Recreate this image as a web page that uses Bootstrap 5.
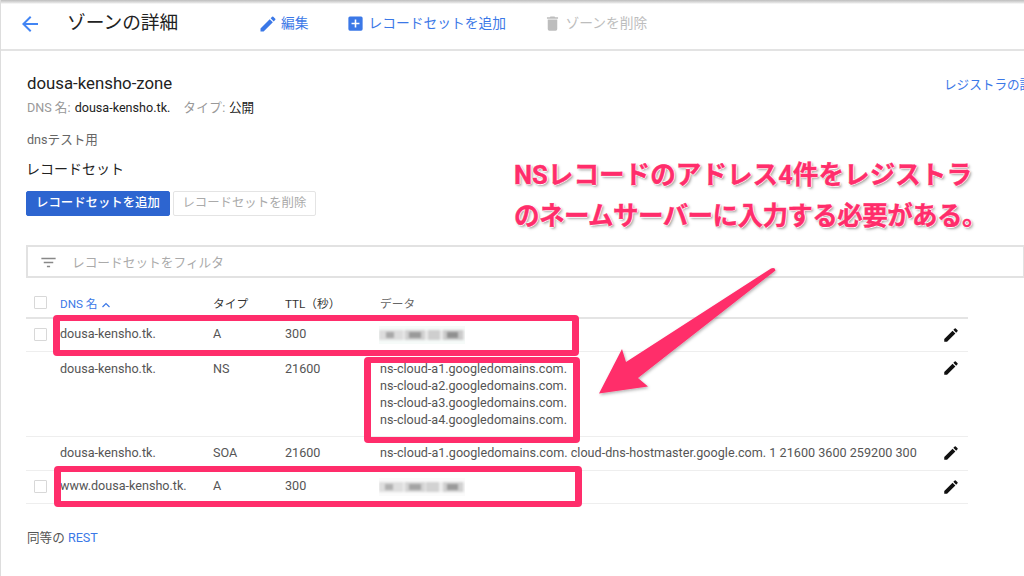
<!DOCTYPE html>
<html lang="ja">
<head>
<meta charset="utf-8">
<title>ゾーンの詳細</title>
<link href="https://cdn.jsdelivr.net/npm/bootstrap@5.3.0/dist/css/bootstrap.min.css" rel="stylesheet">
<style>
html,body{width:1024px;height:576px;overflow:hidden}
body{font-family:Roboto,"Noto Sans CJK JP",sans-serif;font-size:12.6px;color:#333;background:#fff;position:relative;border-left:1px solid #ddd}
.topbar{height:51px;border-bottom:2px solid #e3e3e3;padding:0 0 2px 17px;background:linear-gradient(#bdbdbd,#e8e8e8 3px,#fff 4px)}
.back-ic{width:24px;height:24px;fill:#4285f4;flex:none}
.page-title{font-size:18.7px;line-height:1;color:#222;margin:0 0 0 25px;width:190.500px;font-weight:400;flex:none}
.act{font-size:13.750px;color:#3b78e7;white-space:nowrap;flex:none}
.act svg{fill:currentColor;flex:none}
.act-edit{width:88px;gap:3.500px}
.act-add{width:197.500px;gap:4px}
.act-del{gap:3.500px}
.act-off{color:#bdbdbd}
.main-area{padding:0 0 0 25px}
.zone-name{font-size:16.800px;line-height:20px;color:#222;margin:22px 0 0 1px;font-weight:400}
.reg-link{font-size:12.6px;color:#3b78e7;white-space:nowrap;text-decoration:none;position:absolute;left:943px;top:76px}
.meta-line{font-size:12.6px;color:#999;line-height:16px;margin:7px 0 0 1px}
.meta-line b{font-weight:400;color:#222}
.meta-name{margin-left:1px}
.meta-gap{margin-left:13px;letter-spacing:.4px}
.desc{font-size:12.6px;color:#666;line-height:16px;margin:16px 0 0 1px}
.sect-title{font-size:14px;line-height:18px;color:#222;margin:12px 0 0;font-weight:400}
.btn-prim,.btn-off{font-size:12.4px;line-height:1;border-radius:2px;height:25px;padding:0 9px;display:flex;align-items:center;white-space:nowrap}
.btn-prim{background:#2d65d0;border:1px solid #2d65d0;color:#fff;font-weight:500}
.btn-off{background:#fff;border:1px solid #e4e4e4;color:#aaa;padding:0 8.500px}
.btn-row{margin-top:13px;gap:3px}
.filter-box{height:33px;margin-top:29px;border:2px solid #e2e2e2;border-right-width:1px;color:#aaa;font-size:12.7px;padding:2px 0 0 10.500px;gap:14.500px;width:998px}
.filter-box svg{fill:#888;flex:none}
.filter-text{padding-top:1px}
.rec-table{width:942px;table-layout:fixed;margin:0;font-size:12.6px;color:#555;--bs-table-color:#555}
.rec-table th,.rec-table td{padding:0;vertical-align:middle;border-bottom:1px solid #eee;font-weight:400;box-shadow:none}
.rec-table th{height:40px;border-bottom:2px solid #e4e4e4;font-size:11.700px;color:#333;vertical-align:bottom;padding-bottom:3.500px}
.rec-table th.check-h{padding-bottom:8px}
.rec-table th.data-h{color:#666}
.rec-table th.sort-h{color:#3b78e7}
.rec-table .r1 td{height:33px}
.rec-table .r2 td{height:85px;vertical-align:top;padding-top:8px;line-height:17px}
.rec-table .r3 td{height:34px}
.rec-table .r4 td{height:33px}
.soa-data{letter-spacing:.02px}
.fake-check{display:block;width:13px;height:13px;border:1px solid #d8d8d8;margin-left:8px;border-radius:1px}
.edit-ic{width:18px;height:18px;fill:#111;display:block;margin-left:auto;margin-right:8px}
.r2 .edit-ic{margin-top:-1px}
.blur-box{display:block;width:86px;height:18px;margin-left:-1px;overflow:hidden}
.blur-inner{filter:blur(.8px)}
.footer-line{font-size:12.6px;color:#555;margin:26px 0 0 1px;line-height:16px}
.footer-line a{color:#3b78e7;text-decoration:none}
.hl{position:absolute;border:7px solid #ff2d6b;border-top-width:6px;border-bottom-width:6px;border-radius:4px;pointer-events:none}
.hl-a{left:52px;top:315px;width:526px;height:41px}
.hl-b{left:363px;top:357px;width:216px;height:86px}
.hl-c{left:53px;top:466px;width:528px;height:41px}
.note{position:absolute;left:513px;top:155px;font-size:25.6px;line-height:41px;font-weight:700;color:#ff2d6b;white-space:nowrap;-webkit-text-stroke:.4px #ff2d6b;
text-shadow:1px 0 #fff,-1px 0 #fff,0 1px #fff,0 -1px #fff,1px 1px 2px #999,2px 2px 3px #bbb}
.note-tight{letter-spacing:-.650px}
.arrow-art{position:absolute;left:-1px;top:0;pointer-events:none}
</style>
</head>
<body>
<header class="topbar d-flex align-items-center">
  <svg class="back-ic" viewBox="0 0 24 24"><path d="M20 11H7.830l5.590-5.590L12 4l-8 8 8 8 1.410-1.410L7.830 13H20z"/></svg>
  <h1 class="page-title">ゾーンの詳細</h1>
  <div class="act act-edit d-flex align-items-center"><svg width="20" height="20" viewBox="0 0 24 24"><path d="M3 17.250V21h3.750L17.810 9.940l-3.750-3.750L3 17.250zM20.710 7.040a1 1 0 0 0 0-1.410l-2.340-2.340a1 1 0 0 0-1.410 0l-1.830 1.830 3.750 3.750 1.830-1.830z"/></svg>編集</div>
  <div class="act act-add d-flex align-items-center"><svg width="19" height="19" viewBox="0 0 24 24"><path d="M19 3H5a2 2 0 0 0-2 2v14a2 2 0 0 0 2 2h14a2 2 0 0 0 2-2V5a2 2 0 0 0-2-2zm-2 10h-4v4h-2v-4H7v-2h4V7h2v4h4v2z"/></svg>レコードセットを追加</div>
  <div class="act act-off act-del d-flex align-items-center"><svg width="19" height="19" viewBox="0 0 24 24"><path d="M6 19a2 2 0 0 0 2 2h8a2 2 0 0 0 2-2V7H6v12zM19 4h-3.500l-1-1h-5l-1 1H5v2h14V4z"/></svg>ゾーンを削除</div>
</header>

<main class="main-area">
  <h2 class="zone-name">dousa-kensho-zone</h2>
  <a class="reg-link" href="#">レジストラの設定</a>
  <div class="meta-line">DNS 名: <b class="meta-name">dousa-kensho.tk.</b><span class="meta-gap">タイプ:</span> <b>公開</b></div>
  <p class="desc mb-0">dnsテスト用</p>
  <h3 class="sect-title">レコードセット</h3>
  <div class="d-flex btn-row">
    <button type="button" class="btn btn-prim">レコードセットを追加</button>
    <button type="button" class="btn btn-off">レコードセットを削除</button>
  </div>
  <div class="filter-box d-flex align-items-center">
    <svg width="19" height="19" viewBox="0 0 24 24"><path d="M10 18h4v-2h-4v2zM3 6v2h18V6H3zm3 7h12v-2H6v2z"/></svg>
    <span class="filter-text">レコードセットをフィルタ</span>
  </div>
  <table class="table rec-table">
    <colgroup><col style="width:34px"><col style="width:153px"><col style="width:72px"><col style="width:95px"><col><col style="width:41px"></colgroup>
    <thead><tr>
      <th class="check-h"><span class="fake-check"></span></th>
      <th class="sort-h">DNS 名 <svg width="12" height="12" viewBox="0 0 24 24" fill="none" stroke="#3b78e7" stroke-width="2.400"><path d="M5 16l7-7 7 7"/></svg></th>
      <th>タイプ</th><th>TTL（秒）</th><th class="data-h">データ</th><th></th>
    </tr></thead>
    <tbody>
      <tr class="r1"><td><span class="fake-check"></span></td><td>dousa-kensho.tk.</td><td>A</td><td>300</td>
        <td><svg class="blur-box" viewBox="0 0 86 18"><rect width="86" height="18" fill="#f6fbf9"/><g class="blur-inner"><rect y="4" width="86" height="10" fill="#ebebeb"/><rect y="4" width="24" height="10" fill="#dcdcdc"/><rect x="7" y="6" width="8" height="6" fill="#a8a8a8"/><rect x="26" y="4" width="20" height="10" fill="#d0d0d0"/><rect x="30" y="6" width="12" height="6" fill="#9a9a9a"/><rect x="49" y="4" width="12" height="10" fill="#cecece"/><rect x="64" y="4" width="20" height="10" fill="#cacaca"/><rect x="68" y="6" width="11" height="6" fill="#909090"/></g></svg></td>
        <td><svg class="edit-ic" viewBox="0 0 24 24"><path d="M3 17.250V21h3.750L17.810 9.940l-3.750-3.750L3 17.250zM20.710 7.040a1 1 0 0 0 0-1.410l-2.340-2.340a1 1 0 0 0-1.410 0l-1.830 1.830 3.750 3.750 1.830-1.830z"/></svg></td></tr>
      <tr class="r2"><td></td><td>dousa-kensho.tk.</td><td>NS</td><td>21600</td>
        <td>ns-cloud-a1.googledomains.com.<br>ns-cloud-a2.googledomains.com.<br>ns-cloud-a3.googledomains.com.<br>ns-cloud-a4.googledomains.com.</td>
        <td><svg class="edit-ic" viewBox="0 0 24 24"><path d="M3 17.250V21h3.750L17.810 9.940l-3.750-3.750L3 17.250zM20.710 7.040a1 1 0 0 0 0-1.410l-2.340-2.340a1 1 0 0 0-1.410 0l-1.830 1.830 3.750 3.750 1.830-1.830z"/></svg></td></tr>
      <tr class="r3"><td></td><td>dousa-kensho.tk.</td><td>SOA</td><td>21600</td>
        <td class="text-nowrap soa-data">ns-cloud-a1.googledomains.com. cloud-dns-hostmaster.google.com. 1 21600 3600 259200 300</td>
        <td><svg class="edit-ic" viewBox="0 0 24 24"><path d="M3 17.250V21h3.750L17.810 9.940l-3.750-3.750L3 17.250zM20.710 7.040a1 1 0 0 0 0-1.410l-2.340-2.340a1 1 0 0 0-1.410 0l-1.830 1.830 3.750 3.750 1.830-1.830z"/></svg></td></tr>
      <tr class="r4"><td><span class="fake-check"></span></td><td>www.dousa-kensho.tk.</td><td>A</td><td>300</td>
        <td><svg class="blur-box" viewBox="0 0 86 18"><rect width="86" height="18" fill="#fbfbfb"/><g class="blur-inner"><rect y="4" width="86" height="10" fill="#eeeeee"/><rect y="4" width="24" height="10" fill="#dedede"/><rect x="6" y="6" width="8" height="6" fill="#b0b0b0"/><rect x="26" y="4" width="20" height="10" fill="#d4d4d4"/><rect x="30" y="6" width="12" height="6" fill="#a4a4a4"/><rect x="47" y="4" width="13" height="10" fill="#d2d2d2"/><rect x="64" y="4" width="20" height="10" fill="#d0d0d0"/><rect x="68" y="6" width="11" height="6" fill="#9a9a9a"/></g></svg></td>
        <td><svg class="edit-ic" viewBox="0 0 24 24"><path d="M3 17.250V21h3.750L17.810 9.940l-3.750-3.750L3 17.250zM20.710 7.040a1 1 0 0 0 0-1.410l-2.340-2.340a1 1 0 0 0-1.410 0l-1.830 1.830 3.750 3.750 1.830-1.830z"/></svg></td></tr>
    </tbody>
  </table>
  <p class="footer-line mb-0">同等の <a href="#">REST</a></p>
</main>

<div class="hl hl-a"></div>
<div class="hl hl-b"></div>
<div class="hl hl-c"></div>
<div class="note">NSレコードのアドレス4件をレジストラ<br><span class="note-tight">のネームサーバーに入力する必要がある。</span></div>
<svg class="arrow-art" width="1024" height="576" viewBox="0 0 1024 576"><defs><filter id="shade" x="-10%" y="-10%" width="120%" height="120%"><feDropShadow dx="1" dy="1.500" stdDeviation="1.500" flood-color="#000" flood-opacity=".3"/></filter></defs><path filter="url(#shade)" fill="#ff2d6b" d="M771 268.500Q775 267 775.500 270.500L638 378 648 386.500 599 393.500 622 349 626 362z"/></svg>
</body>
</html>
